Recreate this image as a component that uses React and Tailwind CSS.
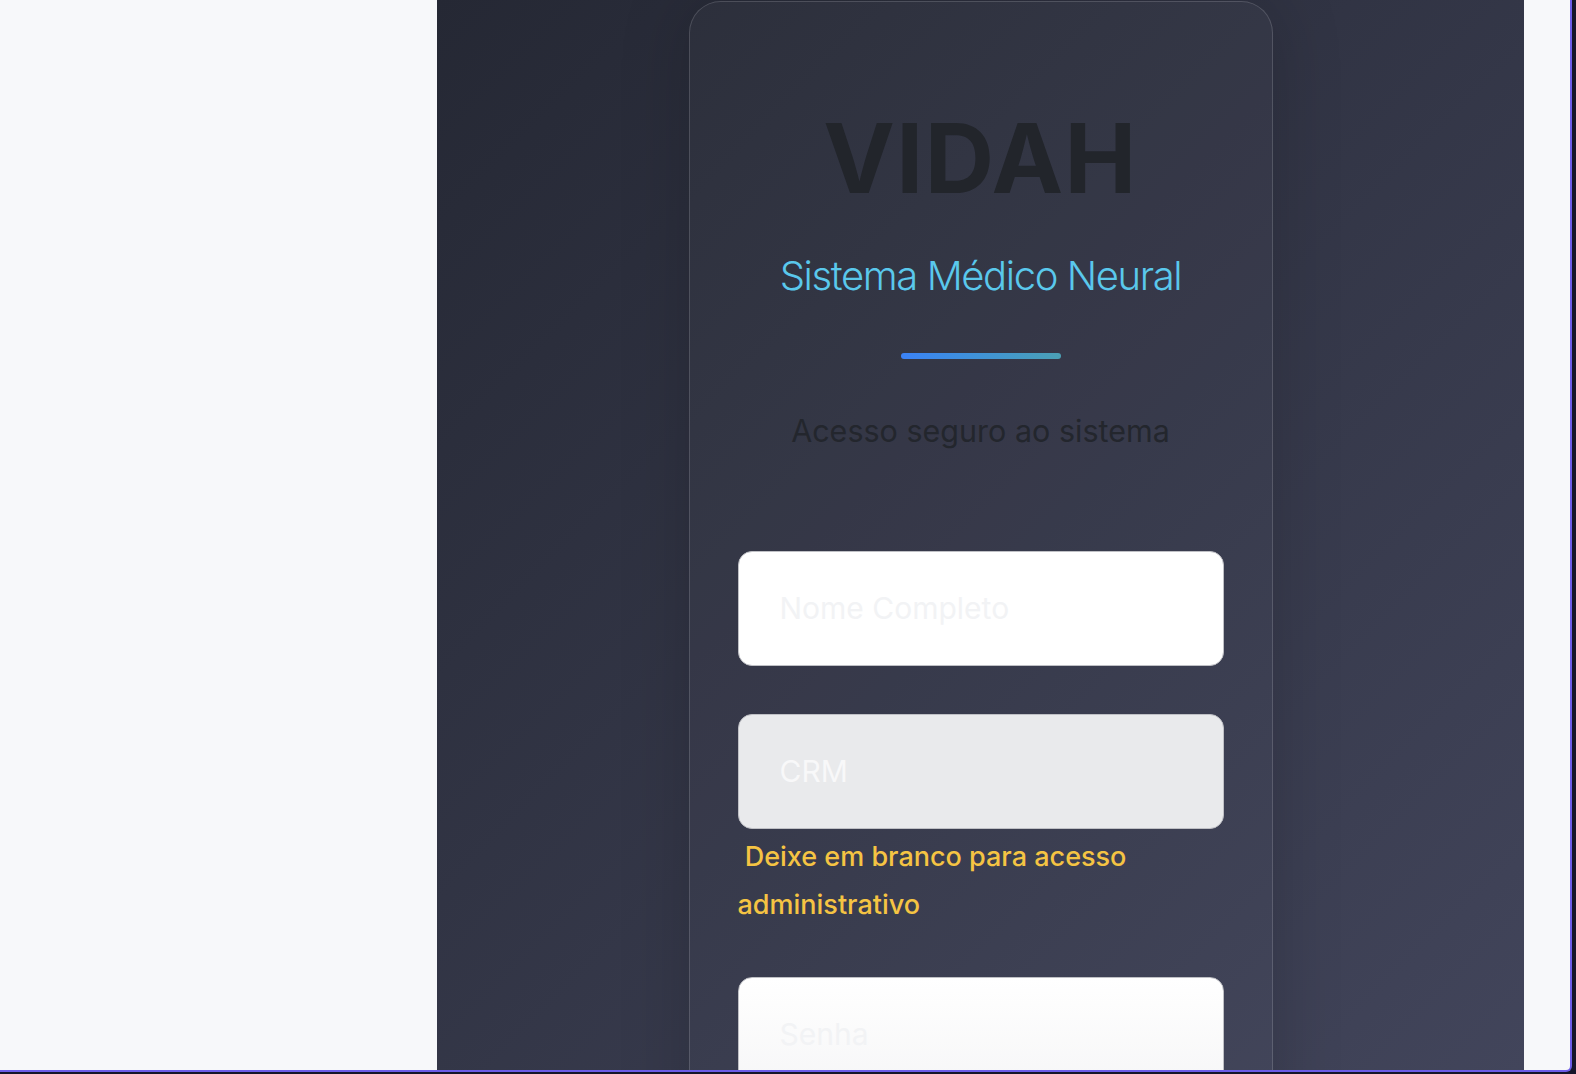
import React from "react";

export default function App() {
    return (
        <div className="w-[1576px] h-[1074px] bg-[#15152a] overflow-hidden font-['Inter',sans-serif]">
            <div className="w-[1572px] h-[1072px] flex overflow-hidden rounded-br-[6px] border-r-2 border-b-2 border-[#6c5ce7] bg-[#f7f8fa]">
                <div className="w-[437px] shrink-0" />

                <main className="w-[1087px] shrink-0 h-full flex justify-center pt-px overflow-hidden bg-linear-to-br from-[#252834] to-[#42455b]">
                    <div className="w-[584px] shrink-0 h-[1200px] rounded-[32px] border border-white/15 bg-white/[0.02] shadow-[0_0_70px_rgba(0,0,0,0.18)] p-12 flex flex-col">

                        <h1 className="mt-[60px] text-center text-[96px] leading-none font-bold tracking-[0.015em] text-[#22252b]">VIDAH</h1>
                        <p className="mt-[50px] text-center text-[40px] leading-none font-light tracking-[-0.035em] text-[#5ac8ec]">Sistema Médico Neural</p>
                        <div className="mt-[57px] mx-auto w-[160px] h-[6px] rounded-full bg-linear-to-r from-[#3b82f6] to-[#4ba0b4]" />
                        <p className="mt-[57px] text-center text-[30.5px] leading-none text-[#23262d]">Acesso seguro ao sistema</p>

                        <form className="mt-[104px] flex flex-col gap-12">
                            <input
                                type="text"
                                placeholder="Nome Completo"
                                className="w-full h-[115px] rounded-[14px] border-[1.5px] border-[#bfc0c5] bg-white pl-[41px] text-[30px] outline-none placeholder:text-[#f2f3f5]"
                            />

                            <div>
                                <input
                                    type="text"
                                    placeholder="CRM"
                                    className="w-full h-[115px] rounded-[14px] border-[1.5px] border-[#bfc0c5] bg-[#e9eaec] pl-[41px] text-[30px] outline-none placeholder:text-[#f8f8f9]"
                                />
                                <p className="mt-1 text-[27px] leading-[48px] font-medium text-[#f5c443]">&nbsp;Deixe em branco para acesso administrativo</p>
                            </div>

                            <input
                                type="password"
                                placeholder="Senha"
                                className="w-full h-[115px] rounded-[14px] border-[1.5px] border-[#bfc0c5] bg-linear-to-b from-white to-[#f6f6f7] pl-[41px] text-[30px] outline-none placeholder:text-[#f2f3f5]"
                            />
                        </form>
                    </div>
                </main>
            </div>
        </div>
    );
}
